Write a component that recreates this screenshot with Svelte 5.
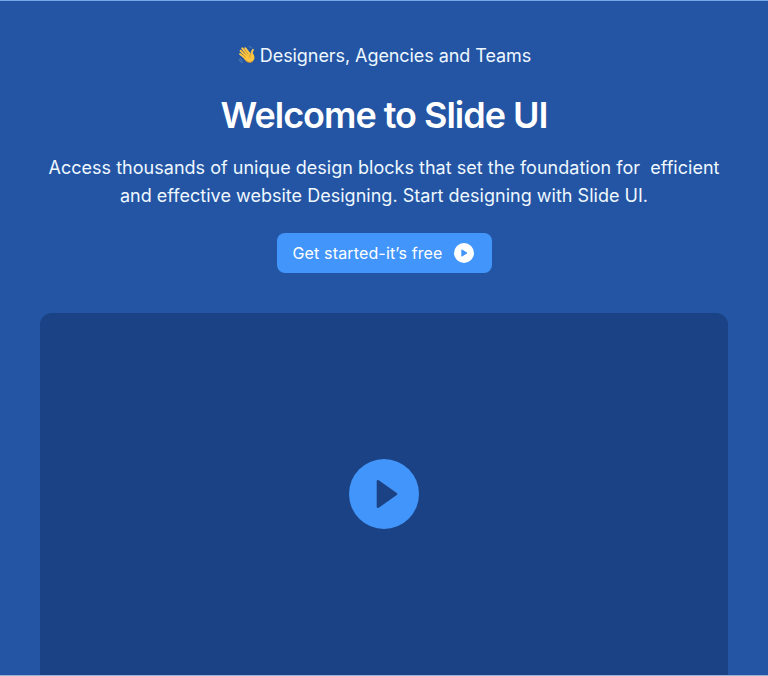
<script>
  const lines = [
    'Access thousands of unique design blocks that set the foundation for\u00a0 efficient',
    'and effective website Designing. Start designing with Slide UI.'
  ];
</script>

<main class="hero">
  <p class="eyebrow">
    <svg class="wave" viewBox="0 0 20 20" aria-hidden="true">
      <g fill="none" stroke="#fbc84a" stroke-width="2" stroke-linecap="round">
        <path d="M9 11 3.6 5.8M10.5 9.5 5.3 3.3M12.5 8.8 8.2 3.2M8 13 3.1 9" />
        <path d="M14.8 9.5Q14.5 6.4 16 4.9" />
      </g>
      <path d="M6.9 9 12 6.8 14 9 15.7 8C18 11.2 18.2 14.2 15.9 16.1 13.4 18.2 10.2 17.2 7.9 14.8L5.8 11.9Z" fill="#fbc540" />
      <path d="M4.8 5.6 9 9.8M7 3.9l3.9 5M4.8 8.9l3.6 3.2M14.3 8.8c-1.7.7-2.1 2.1-1.6 3.6" fill="none" stroke="#bd8428" stroke-width=".65" stroke-linecap="round" />
      <path d="M8.4 15.4c2.4 2.2 5.2 2.7 7.5.7" fill="none" stroke="#e39a29" stroke-width=".9" />
      <path d="M1.9 14.3q.7 2.5 3.4 3.2M3.5 13.8q.5 1.5 1.9 2M12.2 1.6q2 .1 2.9 1.5" fill="none" stroke="#6e99bf" stroke-width=".6" stroke-linecap="round" />
    </svg>
    <span>Designers, Agencies and Teams</span>
  </p>
  <h1>Welcome to Slide UI</h1>
  <p class="intro">
    {#each lines as line}
      <span>{line}</span>
    {/each}
  </p>
  <button class="cta">
    <span>Get started-it’s free</span>
    <svg viewBox="0 0 20 20" aria-hidden="true">
      <circle cx="10" cy="10" r="10" fill="#fff" />
      <path d="M7.8 6.8v6.4l5.2-3.2Z" fill="#4295fa" stroke="#4295fa" stroke-width=".9" stroke-linejoin="round" />
    </svg>
  </button>
  <section class="video">
    <button class="play" aria-label="Play video">
      <svg viewBox="0 0 70 70" aria-hidden="true">
        <path d="M29 22.3v25.4L47 35Z" fill="#1a4284" stroke="#1a4284" stroke-width="2.6" stroke-linejoin="round" />
      </svg>
    </button>
  </section>
</main>

<style>
  :global(body) { margin: 0; }
  .hero {
    box-sizing: border-box;
    height: 676px;
    padding-top: 41px;
    border-top: 1px solid #78a8e8;
    border-bottom: 1px solid #9ab4d9;
    background: #2355a4;
    color: #fff;
    font-family: Inter, "Liberation Sans", sans-serif;
    display: flex;
    flex-direction: column;
    align-items: center;
    overflow: hidden;
  }
  p, h1 { margin: 0; white-space: nowrap; }
  svg { display: block; flex: none; }
  .eyebrow {
    display: flex;
    align-items: center;
    gap: 3px;
    height: 28px;
    font-size: 18px;
    line-height: 28px;
    letter-spacing: -.07px;
    color: #eff8ff;
  }
  .wave { width: 20px; height: 20px; margin-top: -2px; }
  h1 {
    margin-top: 23px;
    font-size: 36px;
    line-height: 44px;
    font-weight: 600;
    letter-spacing: -1.02px;
  }
  .intro {
    display: flex;
    flex-direction: column;
    align-items: center;
    margin-top: 17px;
    font-size: 18px;
    line-height: 28px;
    letter-spacing: .02px;
    color: #eff8ff;
  }
  .cta {
    box-sizing: border-box;
    flex: none;
    display: flex;
    align-items: center;
    justify-content: space-between;
    width: 215px;
    height: 40px;
    margin-top: 23px;
    padding: 0 18px 0 16px;
    border: 0;
    border-radius: 8px;
    background: #4295fa;
    color: #fff;
    font: 16px/24px Inter, "Liberation Sans", sans-serif;
    letter-spacing: .15px;
    white-space: nowrap;
  }
  .cta svg { width: 20px; height: 20px; }
  .video {
    flex: none;
    display: flex;
    align-items: center;
    justify-content: center;
    width: 688px;
    height: 362px;
    margin-top: 40px;
    border-radius: 12px 12px 0 0;
    background: #1a4284;
  }
  .play {
    width: 70px;
    height: 70px;
    padding: 0;
    border: 0;
    border-radius: 50%;
    background: #4295fa;
  }
  .play svg { width: 70px; height: 70px; }
</style>
